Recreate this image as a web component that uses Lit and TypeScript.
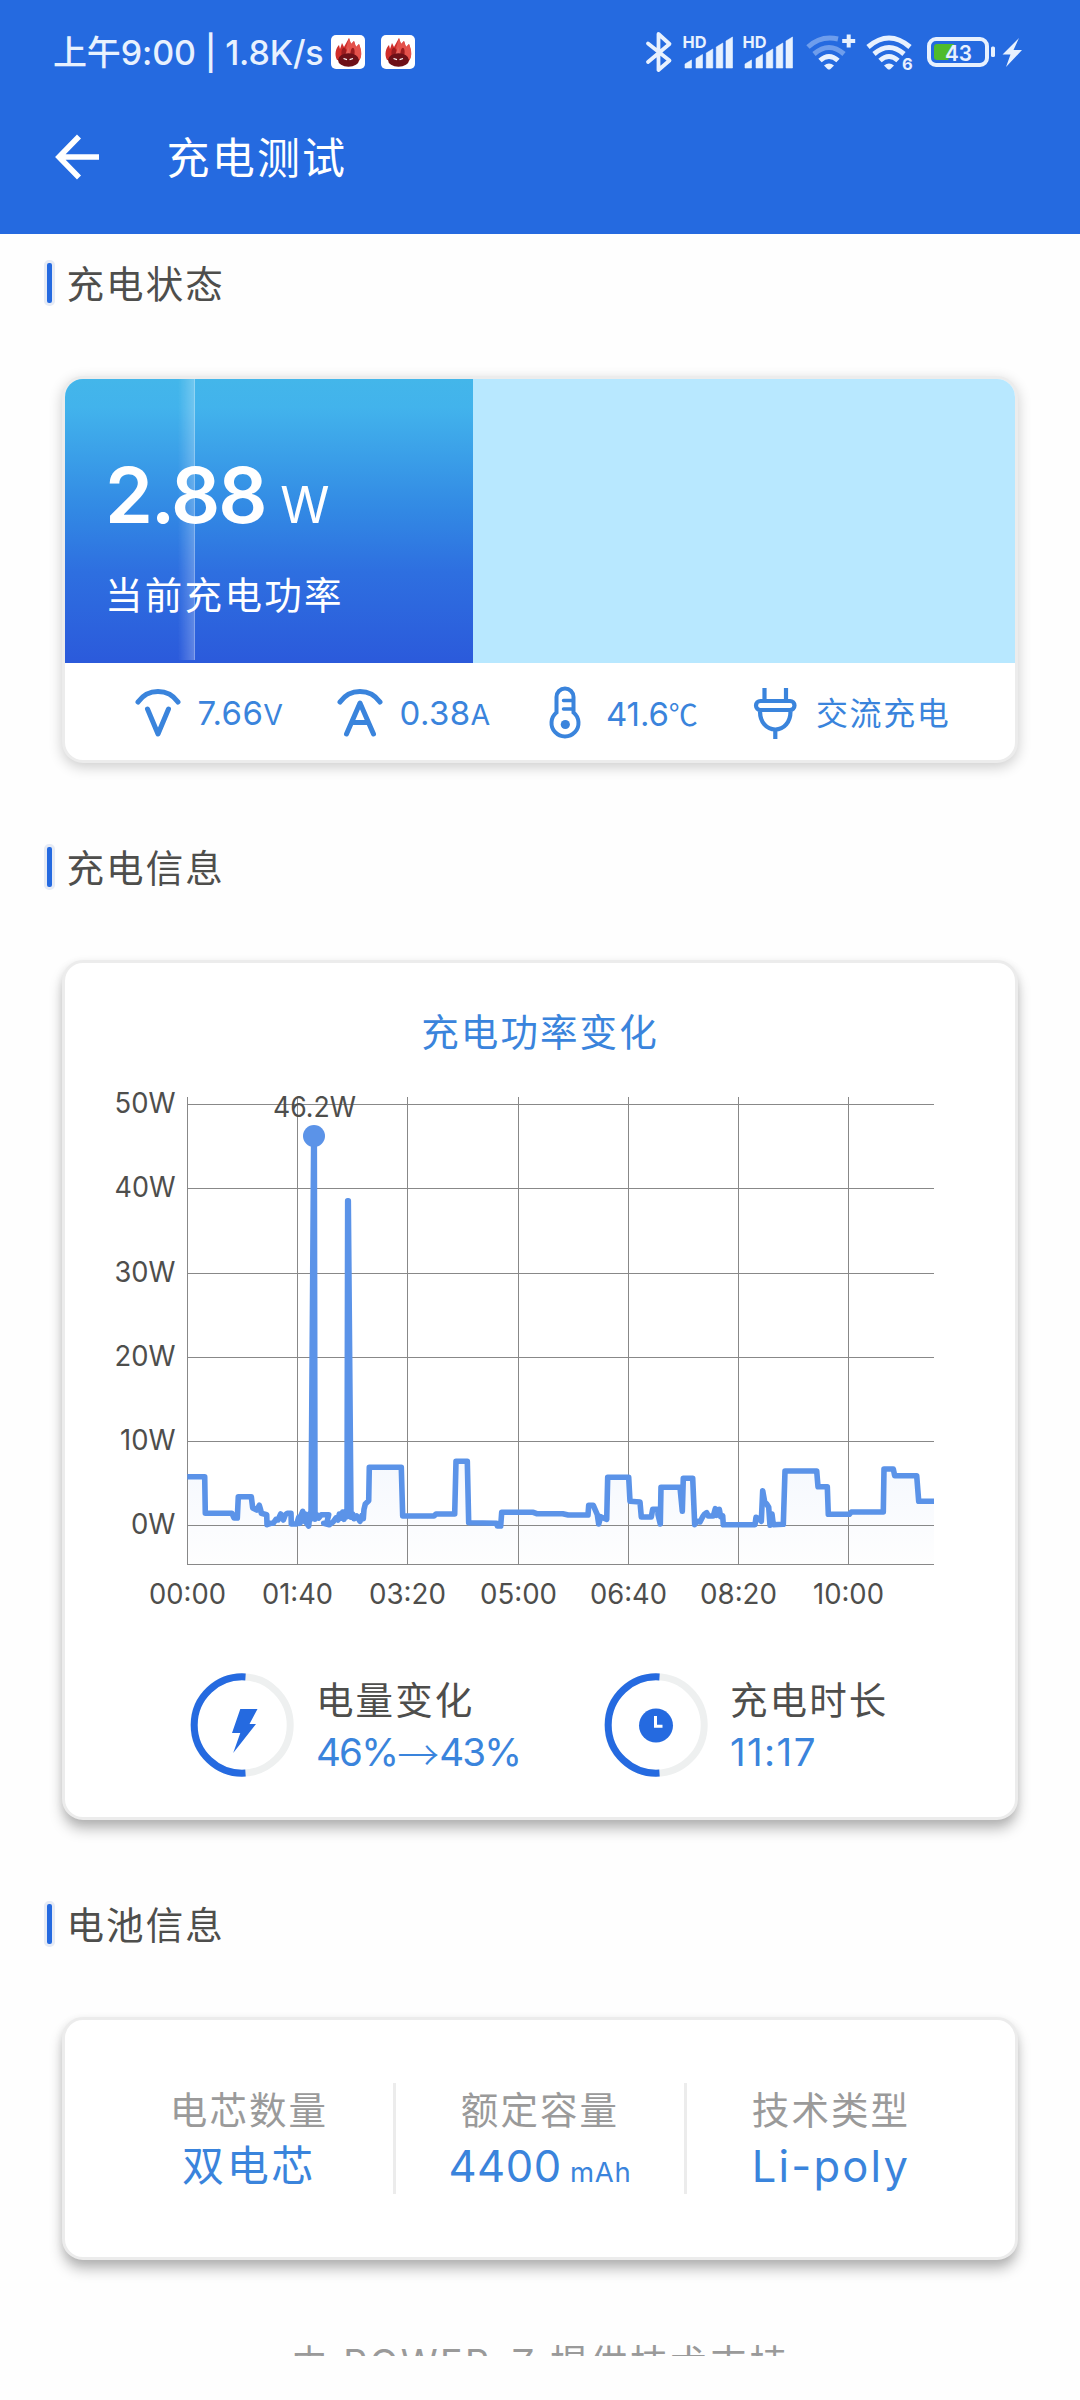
import { LitElement, html, svg, css } from "lit";
import { customElement, property } from "lit/decorators.js";

const BLUE = "#3a84dc";
const LINE = "#5b93e8";

/* ---------- status bar ---------- */

@customElement("status-bar")
class StatusBar extends LitElement {
  static styles = css`
    :host { display: block; }
    .bar { display: flex; align-items: center; justify-content: space-between; height: 104px; padding: 0 58px 0 53px; box-sizing: border-box; color: #e8f1fe; }
    .left { display: flex; align-items: center; height: 104px; }
    .time { font-size: 34px; line-height: 50px; font-weight: 500; white-space: pre; width: 278px; letter-spacing: -0.15px; padding-top: 1px; }
    .app { display: block; width: 34px; height: 34px; margin-right: 16px; }
    .icons { display: block; }
  `;

  private appIcon() {
    return html`<svg class="app" viewBox="0 0 34 34">
      <rect width="34" height="34" rx="5" fill="#fff" />
      <path d="M6 25C3 19 5 13 8 10L9 14L11 8L13 12L18 3L20 9L23 6L25 12L28 9C31 17 31 23 27 27Z" fill="#cf2d2b" />
      <path d="M18 3L20 9L23 6L25 12L28 9C31 16 31 22 28 25L19 20L15 13Z" fill="#e4514b" />
      <path d="M11 22C9 14 13 10 15 15L16 20H19L20 15C22 10 25 14 23 22Z" fill="#9b1c1f" />
      <path d="M14.5 19L17.5 12L19 19Z" fill="#e4625c" />
      <ellipse cx="17.5" cy="25" rx="10.5" ry="6.8" fill="#6d1018" />
      <path d="M12.5 23.5L16 24.6M22 23.5L18.6 24.6" stroke="#fff" stroke-width="1.2" />
    </svg>`;
  }

  private signal(dx: number) {
    const bars = [
      [685, 60], [696, 54.5], [706.3, 49], [716.3, 43], [726, 37],
    ];
    return svg`<g transform=${`translate(${dx} 0)`}>
      <text x="682.5" y="48" font-size="16.5" font-weight="700" textLength="24" lengthAdjust="spacingAndGlyphs">HD</text>
      ${bars.map(([x, y]) => svg`<path d=${`M${x} ${y + 4}L${x + 6.5} ${y}V68H${x}Z`} stroke="#e8f1fe" stroke-width=".6" stroke-linejoin="round" />`)}
    </g>`;
  }

  private wifi(cx: number, dim: boolean) {
    const weak = dim ? 0.38 : 1;
    return svg`<g transform=${`translate(${cx} 0)`} fill="none" stroke="#e8f1fe" stroke-width="5">
      <path d=${dim ? "M-21 47Q-8 35 9 39" : "M-21 47Q0 29 21 47"} opacity=${weak} />
      <path d="M-15 54Q0 41 15 54" opacity=${weak} />
      <path d="M-9 60.500Q0 52.500 9 60.500" />
      <path d="M-5 65.500Q0 61.500 5 65.500L1.500 69Q0 70 -1.500 69Z" fill="#e8f1fe" stroke="none" />
    </g>`;
  }

  render() {
    return html`<div class="bar">
      <div class="left">
        <span class="time">上午9:00 | 1.8K/s</span>
        ${this.appIcon()}${this.appIcon()}
      </div>
      <svg class="icons" width="380" height="104" viewBox="642 0 380 104" font-family="Inter, sans-serif" fill="#e8f1fe">
        <path d="M648 43.500L669.500 60.500L658.500 70V34L669.500 44L648 62" fill="none" stroke="#e8f1fe" stroke-width="3.800" stroke-linejoin="round" stroke-linecap="round" />
        ${this.signal(0)}${this.signal(60)}
        ${this.wifi(829, true)}
        <path d="M848.700 34.500V47.500M842.200 41H855.200" stroke="#e8f1fe" stroke-width="4" />
        ${this.wifi(889, false)}
        <text x="902" y="70" font-size="16.500" font-weight="700">6</text>
        <rect x="929" y="39" width="58" height="26" rx="7" fill="none" stroke="#e8f1fe" stroke-width="4" />
        <path d="M934 47Q934 44 937 44H954L948 60H937Q934 60 934 57Z" fill="#4fbb2b" />
        <rect x="991" y="46.500" width="4" height="10.500" rx="1.500" />
        <text x="945" y="61" font-size="22" font-weight="600" textLength="27" lengthAdjust="spacingAndGlyphs">43</text>
        <path d="M1019 38L1002.500 54.500H1010.500L1006 67L1022 50H1013.500Z" />
      </svg>
    </div>`;
  }
}

/* ---------- section heading and card ---------- */

@customElement("info-section")
class InfoSection extends LitElement {
  @property() heading = "";
  static styles = css`
    :host { display: block; }
    .head { display: flex; align-items: center; height: 46px; margin-bottom: 70px; padding-left: 44px; }
    .mark { box-sizing: border-box; width: 11px; height: 46px; border: 3px solid #e6ebf5; border-radius: 5px; background: #256ae0; }
    .title { margin-left: 11.5px; font-size: 37.5px; line-height: 46px; letter-spacing: 2.1px; color: #4e4e4c; padding-top: 3px; }
    .card { box-sizing: border-box; margin: 0 62px; border: 3px solid #ececec; border-radius: 21px; background: #fff; overflow: hidden; box-shadow: var(--card-shadow); }
  `;
  render() {
    return html`<div class="head"><div class="mark"></div><div class="title">${this.heading}</div></div>
      <div class="card"><slot></slot></div>`;
  }
}

/* ---------- power chart ---------- */

@customElement("power-chart")
class PowerChart extends LitElement {
  static styles = css`
    :host { display: block; }
    .chart { display: block; }
  `;

  /* Samples in thirds of a pixel, measured from the plot's reference corner (100, 1380). */
  private samples = "262,290 314,290 316,400 396,400 402,414 412,414 415,350 454,350 458,384 470,390 478,376 482,390 484,400 500,404 501,434 512,430 520,430 528,418 534,420 542,402 550,420 556,404 562,400 573,400 574,432 590,432 596,412 600,430 604,404 608,394 612,424 616,402 620,430 626,438 630,400 633,418 641,-732 643,-732 645,418 650,404 656,414 664,404 686,404 680,430 671,430 688,434 700,425 708,414 714,420 718,402 724,414 728,396 732,418 738,394 741,410 743,-538 745,-538 753,412 758,402 762,416 770,408 780,424 786,406 790,416 792,388 796,372 806,362 808,262 904,262 908,408 1002,408 1008,402 1064,402 1068,244 1102,244 1106,428 1190,430 1192,438 1202,438 1205,397 1300,397 1310,401 1388,401 1405,405 1464,405 1466,376 1480,376 1492,404 1496,432 1502,410 1510,414 1520,418 1523,292 1586,292 1590,364 1620,366 1624,411 1654,411 1658,388 1674,388 1674,404 1681,432 1683,322 1740,322 1747,394 1750,295 1778,295 1784,434 1790,424 1800,426 1808,410 1814,402 1820,398 1825,408 1840,408 1846,386 1850,406 1858,388 1862,410 1868,408 1870,434 1965,434 1968,412 1976,416 1984,424 1988,332 1994,366 2000,372 2006,382 2010,436 2016,402 2020,434 2050,433 2055,273 2150,273 2154,320 2182,320 2185,403 2248,403 2254,396 2350,396 2352,267 2380,267 2384,287 2450,287 2456,364 2502,364";

  render() {
    const pts = this.samples.split(" ").map((p) => {
      const [x, y] = p.split(",").map(Number);
      return [+(100 + x / 3).toFixed(1), +(1380 + y / 3).toFixed(1)];
    });
    const line = "M" + pts.map((p) => p.join(" ")).join("L");
    const area = `${line}L934 1564L187.500 1564Z`;
    const rows = [50, 40, 30, 20, 10, 0].map((w, i) => ({ w, y: [1104.5, 1188.5, 1273.5, 1357.5, 1441.5, 1525.5][i] }));
    const cols = ["00:00", "01:40", "03:20", "05:00", "06:40", "08:20", "10:00"].map((t, i) => ({ t, x: [187.5, 297.5, 407.5, 518.5, 628.5, 738.5, 848.5][i] }));
    return html`<svg class="chart" width="950" height="540" viewBox="65 1080 950 540" font-family="Inter, sans-serif" font-size="28" fill="#4e4e4c">
      <defs>
        <linearGradient id="fade" gradientUnits="userSpaceOnUse" x1="0" y1="1440" x2="0" y2="1564">
          <stop offset="0" stop-color="#f3f7fe" /><stop offset="1" stop-color="#fefefe" />
        </linearGradient>
        <clipPath id="plot"><rect x="187" y="1090" width="747" height="480" /></clipPath>
      </defs>
      <path d=${area} fill="url(#fade)" />
      <g stroke="#888" stroke-width="1" fill="none">
        ${rows.map((r) => svg`<path d=${`M187 ${r.y}H934`} />`)}
        ${cols.map((c) => svg`<path d=${`M${c.x} 1097V1564`} />`)}
        <path d="M187 1564.500H934" />
      </g>
      <path d=${line} fill="none" stroke=${LINE} stroke-width="5.600" stroke-linejoin="round" clip-path="url(#plot)" />
      <circle cx="314" cy="1136" r="11" fill=${LINE} />
      <text x="314.500" y="1116.700" text-anchor="middle" textLength="83" lengthAdjust="spacingAndGlyphs">46.2W</text>
      ${rows.map((r) => svg`<text x="175.500" y=${r.y + 8.5} text-anchor="end" textLength=${r.w === 0 ? 44.5 : r.w === 10 ? 55.5 : 61} lengthAdjust="spacingAndGlyphs">${r.w}W</text>`)}
      ${cols.map((c) => svg`<text x=${c.x} y="1603.500" text-anchor="middle" textLength=${c.t === "01:40" || c.t === "10:00" ? 71 : 77} lengthAdjust="spacingAndGlyphs">${c.t}</text>`)}
    </svg>`;
  }
}

/* ---------- half-filled ring gauge ---------- */

@customElement("ring-stat")
class RingStat extends LitElement {
  @property() kind = "bolt";
  static styles = css`
    :host { display: flex; align-items: center; }
    .ring { display: block; width: 104px; height: 104px; margin-right: 22px; }
    .text { display: flex; flex-direction: column; padding-top: 6px; }
  `;
  render() {
    return html`<svg class="ring" viewBox="0 0 104 104">
        <circle cx="52" cy="52" r="48.200" fill="none" stroke="#eef0f0" stroke-width="7" />
        <path d="M55.500 3.900A48.200 48.200 0 1 0 55.500 100.100" fill="none" stroke="#256ae0" stroke-width="7" />
        ${this.kind === "bolt"
          ? svg`<path d="M50.300 36H67.500L59.500 51H66L43.200 80L50.300 60H42Z" fill="#256ae0" />`
          : svg`<circle cx="52" cy="52.500" r="17" fill="#256ae0" /><path d="M51.500 43V53.300H58.500" fill="none" stroke="#fff" stroke-width="3" />`}
      </svg>
      <div class="text"><slot></slot></div>`;
  }
}

/* ---------- page ---------- */

@customElement("app-root")
class AppRoot extends LitElement {
  static styles = css`
    :host { display: block; font-family: Inter, "Noto Sans CJK SC", sans-serif; color: #4e4e4c; --blue: #3a84dc; }
    .page { width: 1080px; height: 2400px; background: #fefefe; overflow: hidden; display: flex; flex-direction: column; }
    .header { height: 234px; background: #256ae0; flex: none; color: #fff; }
    .nav { display: flex; align-items: center; height: 106px; padding-left: 54px; }
    .back { display: block; width: 46px; height: 46px; }
    .name { margin-left: 66.5px; font-size: 43px; line-height: 60px; letter-spacing: 2.2px; padding-top: 2px; }
    .body { height: 2122px; flex: none; overflow: hidden; padding-top: 26px; box-sizing: border-box; display: flex; flex-direction: column; gap: 81px; }
    .soft { --card-shadow: 0 4px 14px rgba(0, 0, 0, 0.2); }
    .deep { --card-shadow: 0 10px 14px -1px rgba(0, 0, 0, 0.27), 0 2px 9px rgba(0, 0, 0, 0.08); }

    .meter { height: 284px; background: #b8e8ff; display: flex; }
    .fill { position: relative; width: 408px; box-sizing: border-box; padding: 81px 0 0 40px; background: linear-gradient(#43b6ea, #42b3ec 10%, #3289e4 46%, #2e6fe0 68%, #2b5adb); color: #fff; }
    .shine { position: absolute; left: 113px; top: 0; width: 16px; height: 281px; border-right: 1px solid rgba(255, 255, 255, 0.42); background: linear-gradient(90deg, rgba(255, 255, 255, 0), rgba(255, 255, 255, 0.24)); }
    .watts { position: relative; display: flex; align-items: baseline; height: 70px; line-height: 70px; }
    .num { font-size: 77px; font-weight: 600; letter-spacing: -2.2px; }
    .unit { font-size: 50px; margin-left: 15px; }
    .caption { position: relative; margin-top: 40px; font-size: 37.5px; line-height: 52px; letter-spacing: 2.3px; white-space: nowrap; }
    .stats { display: flex; height: 97px; align-items: center; color: var(--blue); padding-left: 69px; }
    .stat { display: flex; align-items: center; height: 97px; font-size: 33px; line-height: 97px; white-space: nowrap; }
    .stat svg { display: block; flex: none; }
    .volt { width: 202px; }
    .amp { width: 213px; }
    .temp { width: 204px; }
    .val { margin-left: 15.5px; letter-spacing: 0.4px; padding-top: 4px; }
    .small { font-size: 28.5px; }
    .celsius { font-family: "Noto Sans CJK SC", sans-serif; font-size: 29px; letter-spacing: 0; }
    .temp .val { margin-left: 25px; letter-spacing: -0.1px; }
    .ac .val { margin-left: 19px; font-size: 32px; letter-spacing: 1.6px; padding-top: 3px; }

    .charge { height: 854px; display: flex; flex-direction: column; }
    .chart-title { height: 117px; padding-top: 40px; box-sizing: border-box; line-height: 60px; font-size: 37.5px; letter-spacing: 2.1px; text-align: center; color: var(--blue); }
    .rings { display: flex; padding: 53px 0 0 125px; height: 104px; }
    .ring-a { width: 414px; }
    .k { font-size: 37.5px; line-height: 50px; letter-spacing: 2.1px; margin-top: -1px; white-space: nowrap; }
    .v { font-size: 38.5px; line-height: 53px; color: var(--blue); white-space: nowrap; display: flex; letter-spacing: -1.8px; }
    .arrow { font-family: "Noto Sans CJK SC", sans-serif; font-weight: 300; font-size: 42px; width: 42px; letter-spacing: 0; display: flex; justify-content: center; }
    .dur { letter-spacing: 1.4px; }

    .battery { display: flex; height: 237px; box-sizing: border-box; padding-top: 63px; }
    .cell { display: flex; flex-direction: column; align-items: center; height: 111px; box-sizing: border-box; padding-top: 1px; }
    .c1 { width: 328px; padding-left: 40px; }
    .c2 { width: 294px; border-left: 3px solid #ececec; border-right: 3px solid #ececec; }
    .c3 { width: 328px; padding-right: 40px; }
    .label { font-size: 37.5px; line-height: 54px; letter-spacing: 2.1px; color: #9a9a9a; }
    .value { font-size: 43.5px; line-height: 56px; color: var(--blue); white-space: nowrap; letter-spacing: 0.6px; }
    .zh { font-size: 42px; letter-spacing: 2.6px; }
    .poly { letter-spacing: 2.2px; }
    .mah { font-size: 27.5px; margin-left: 8px; letter-spacing: 0.8px; }
    .footer { text-align: center; font-size: 37.5px; line-height: 56px; letter-spacing: 2.4px; color: #9a9a9a; white-space: pre; margin-top: -5px; }
  `;

  render() {
    return html`<div class="page">
      <div class="header">
        <status-bar></status-bar>
        <div class="nav">
          <svg class="back" viewBox="0 0 46 46"><path d="M25 2.500L5 23L25 43.500M5 23H45" fill="none" stroke="#fff" stroke-width="5.600" /></svg>
          <span class="name">充电测试</span>
        </div>
      </div>
      <div class="body">
        <info-section class="soft" heading="充电状态">
          <div class="meter">
            <div class="fill">
              <div class="shine"></div>
              <div class="watts"><span class="num">2.88</span><span class="unit">W</span></div>
              <div class="caption">当前充电功率</div>
            </div>
          </div>
          <div class="stats">
            <div class="stat volt">
              <svg width="48" height="54" viewBox="0 0 48 54" fill="none" stroke=${BLUE} stroke-width="5" stroke-linecap="round" stroke-linejoin="round"><path d="M4 17C14 3 34 3 44 17M13.500 24L24 49L34.500 24" /></svg>
              <span class="val">7.66<span class="small">V</span></span>
            </div>
            <div class="stat amp">
              <svg width="48" height="54" viewBox="0 0 48 54" fill="none" stroke=${BLUE} stroke-width="5" stroke-linecap="round" stroke-linejoin="round"><path d="M4 17C14 3 34 3 44 17M10.500 49L24 18L37.500 49M16 37.500H32" /></svg>
              <span class="val">0.38<span class="small">A</span></span>
            </div>
            <div class="stat temp">
              <svg width="32" height="54" viewBox="0 0 32 54" fill="none" stroke=${BLUE} stroke-width="4"><path d="M7.500 27.500V12A8.500 8.500 0 0 1 24.500 12V27.500A13.500 13.500 0 1 1 7.500 27.500Z" /><path d="M14.500 15.500H24M14.500 24H24" stroke-width="3.500" stroke-linecap="round" /><circle cx="16.300" cy="39.500" r="4.600" fill=${BLUE} stroke="none" /></svg>
              <span class="val">41.6<span class="celsius">℃</span></span>
            </div>
            <div class="stat ac">
              <svg width="44" height="54" viewBox="0 0 44 54" fill="none" stroke=${BLUE} stroke-width="4.200"><path d="M11.500 3V16M33 3V16M22.300 44V54" /><rect x="3" y="16" width="38.500" height="9" rx="4.500" /><path d="M7 26.500C7 37 13.500 44.500 22.300 44.500S37.500 37 37.500 26.500" /></svg>
              <span class="val">交流充电</span>
            </div>
          </div>
        </info-section>

        <info-section class="deep" heading="充电信息">
          <div class="charge">
            <div class="chart-title">充电功率变化</div>
            <power-chart></power-chart>
            <div class="rings">
              <ring-stat class="ring-a" kind="bolt">
                <div class="k">电量变化</div>
                <div class="v"><span>46%</span><span class="arrow">→</span><span>43%</span></div>
              </ring-stat>
              <ring-stat kind="clock">
                <div class="k">充电时长</div>
                <div class="v dur"><span>11:17</span></div>
              </ring-stat>
            </div>
          </div>
        </info-section>

        <info-section class="deep" heading="电池信息">
          <div class="battery">
            <div class="cell c1"><div class="label">电芯数量</div><div class="value zh">双电芯</div></div>
            <div class="cell c2"><div class="label">额定容量</div><div class="value">4400<span class="mah">mAh</span></div></div>
            <div class="cell c3"><div class="label">技术类型</div><div class="value poly">Li-poly</div></div>
          </div>
        </info-section>
        <div class="footer">由 POWER-Z 提供技术支持</div>
      </div>
    </div>`;
  }
}
